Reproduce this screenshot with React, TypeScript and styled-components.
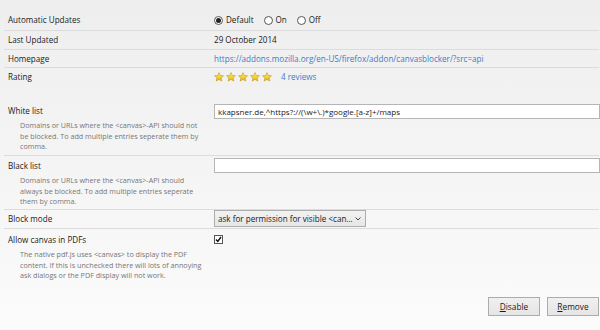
import React from "react";
import styled, { createGlobalStyle } from "styled-components";

const GlobalStyle = createGlobalStyle`
  html, body {
    margin: 0;
    padding: 0;
    width: 600px;
    height: 330px;
    overflow: hidden;
  }
  body {
    font-family: "Open Sans", "Noto Sans", sans-serif;
    font-size: 8.1px;
    color: #1a1a1a;
    background: linear-gradient(#eeeeee, #fbfbfb);
  }
`;

const Page = styled.div`
  display: flex;
  flex-direction: column;
  height: 330px;
  padding: 10px 1px 0 4px;
  box-sizing: border-box;
`;

const Row = styled.div<{ $h: number; $line?: boolean }>`
  display: grid;
  grid-template-columns: 210px 1fr;
  align-items: start;
  height: ${(p) => p.$h}px;
  box-sizing: border-box;
  border-bottom: ${(p) => (p.$line ? "1px solid #dcdcdc" : "none")};
`;

const Label = styled.div<{ $top: number }>`
  padding: ${(p) => p.$top}px 0 0 4px;
  line-height: 12px;
`;

const Desc = styled.div`
  padding: 3px 0 0 16px;
  color: #777;
  font-size: 7.2px;
  line-height: 10.5px;
  width: 183.5px;
`;

const Value = styled.div<{ $top: number }>`
  display: flex;
  align-items: center;
  gap: 6px;
  padding-top: ${(p) => p.$top}px;
  line-height: 12px;
`;

const Radio = styled.span<{ $on?: boolean }>`
  width: 9px;
  height: 9px;
  border-radius: 50%;
  border: 1px solid #555;
  background: #fff;
  box-sizing: border-box;
  display: inline-flex;
  align-items: center;
  justify-content: center;
  &::after {
    content: "";
    width: 5px;
    height: 5px;
    border-radius: 50%;
    background: ${(p) => (p.$on ? "#222" : "transparent")};
  }
`;

const Opt = styled.label`
  display: inline-flex;
  align-items: center;
  gap: 3px;
  margin-right: 4px;
`;

const Link = styled.a`
  color: #3d7cc9;
  text-decoration: none;
`;

const Input = styled.div`
  width: 386px;
  height: 15px;
  border: 1px solid #b5b5b5;
  background: #fff;
  box-sizing: border-box;
  padding: 0 3px;
  line-height: 13px;
  font-size: 8px;
  white-space: nowrap;
`;

const Select = styled.div`
  width: 152px;
  height: 17px;
  border: 1px solid #adadad;
  background: linear-gradient(#f2f2f2, #e6e6e6);
  box-sizing: border-box;
  padding: 0 4px 0 3px;
  display: flex;
  align-items: center;
  justify-content: space-between;
  white-space: nowrap;
`;

const Check = styled.span`
  width: 9px;
  height: 9px;
  border: 1px solid #555;
  background: #fff;
  box-sizing: border-box;
  display: inline-flex;
  align-items: center;
  justify-content: center;
`;

const Spacer = styled.div`
  flex: 1;
`;

const Footer = styled.div`
  display: flex;
  justify-content: flex-end;
  gap: 7px;
  padding-bottom: 14px;
`;

const Button = styled.button`
  width: 52px;
  height: 19px;
  font: inherit;
  font-size: 8.3px;
  color: #1a1a1a;
  border: 1px solid #acacac;
  background: linear-gradient(#f0f0f0, #e5e5e5);
  padding: 0;
  u {
    text-decoration: underline;
  }
`;

const Star = () => (
  <svg width="10" height="10" viewBox="0 0 20 20">
    <defs>
      <linearGradient id="sg" x1="0" y1="0" x2="0" y2="1">
        <stop offset="0" stopColor="#fff27a" />
        <stop offset="1" stopColor="#e9b400" />
      </linearGradient>
    </defs>
    <path
      d="M10 1 L12.6 7 L19 7.5 L14.1 11.7 L15.6 18.2 L10 14.8 L4.4 18.2 L5.9 11.7 L1 7.5 L7.4 7 Z"
      fill="url(#sg)"
      stroke="#b88a00"
      strokeWidth="1"
    />
  </svg>
);

const Stars = styled.span`
  display: inline-flex;
  gap: 2px;
  margin-right: 3px;
`;

export default function App() {
  return (
    <>
      <GlobalStyle />
      <Page>
        <Row $h={21} $line>
          <Label $top={4}>Automatic Updates</Label>
          <Value $top={4}>
            <Opt>
              <Radio $on /> Default
            </Opt>
            <Opt>
              <Radio /> On
            </Opt>
            <Opt>
              <Radio /> Off
            </Opt>
          </Value>
        </Row>
        <Row $h={19} $line>
          <Label $top={3}>Last Updated</Label>
          <Value $top={3}>29 October 2014</Value>
        </Row>
        <Row $h={18} $line>
          <Label $top={3}>Homepage</Label>
          <Value $top={3}>
            <Link>https://addons.mozilla.org/en-US/firefox/addon/canvasblocker/?src=api</Link>
          </Value>
        </Row>
        <Row $h={32}>
          <Label $top={3}>Rating</Label>
          <Value $top={3}>
            <Stars>
              <Star />
              <Star />
              <Star />
              <Star />
              <Star />
            </Stars>
            <Link>4 reviews</Link>
          </Value>
        </Row>
        <Row $h={56} $line>
          <div>
            <Label $top={5}>White list</Label>
            <Desc>
              Domains or URLs where the &lt;canvas&gt;-API should not be blocked. To add multiple entries seperate
              them by comma.
            </Desc>
          </div>
          <Value $top={4}>
            <Input>kkapsner.de,^https?://(\w+\.)*google.[a-z]+/maps</Input>
          </Value>
        </Row>
        <Row $h={54} $line>
          <div>
            <Label $top={4}>Black list</Label>
            <Desc>
              Domains or URLs where the &lt;canvas&gt;-API should always be blocked. To add multiple entries
              seperate them by comma.
            </Desc>
          </div>
          <Value $top={2}>
            <Input />
          </Value>
        </Row>
        <Row $h={19} $line>
          <Label $top={3}>Block mode</Label>
          <Value $top={0}>
            <Select>
              <span>ask for permission for visible &lt;can...</span>
              <svg width="6" height="4" viewBox="0 0 6 4">
                <path d="M0.5 0.5 L3 3 L5.5 0.5" fill="none" stroke="#444" strokeWidth="1" />
              </svg>
            </Select>
          </Value>
        </Row>
        <Row $h={60}>
          <div>
            <Label $top={5}>Allow canvas in PDFs</Label>
            <Desc>
              The native pdf.js uses &lt;canvas&gt; to display the PDF content. If this is unchecked there will lots
              of annoying ask dialogs or the PDF display will not work.
            </Desc>
          </div>
          <Value $top={6}>
            <Check>
              <svg width="7" height="7" viewBox="0 0 7 7">
                <path d="M1 3.5 L2.8 5.5 L6 1" fill="none" stroke="#111" strokeWidth="1.4" />
              </svg>
            </Check>
          </Value>
        </Row>
        <Spacer />
        <Footer>
          <Button>
            <u>D</u>isable
          </Button>
          <Button>
            <u>R</u>emove
          </Button>
        </Footer>
      </Page>
    </>
  );
}
